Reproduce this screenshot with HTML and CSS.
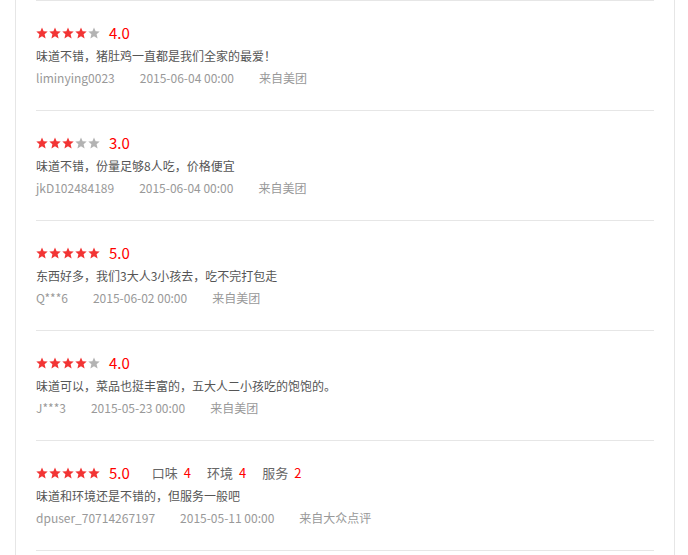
FILE: index.html
```html
<!DOCTYPE html>
<html lang="zh-CN">
<head>
<meta charset="utf-8">
<title>评价</title>
<link rel="stylesheet" href="styles.css">
</head>
<body>
<svg width="0" height="0" class="defs">
  <defs>
    <polygon id="star" points="6,0.4 7.6,4.3 11.7,4.6 8.6,7.3 9.6,11.4 6,9.2 2.4,11.4 3.4,7.3 0.3,4.6 4.4,4.3"/>
  </defs>
</svg>
<div class="panel">
  <ul class="reviews">
    <li class="review">
      <div class="rating-row">
        <span class="stars">
          <svg class="star on" viewBox="0 0 12 12"><use href="#star"/></svg>
          <svg class="star on" viewBox="0 0 12 12"><use href="#star"/></svg>
          <svg class="star on" viewBox="0 0 12 12"><use href="#star"/></svg>
          <svg class="star on" viewBox="0 0 12 12"><use href="#star"/></svg>
          <svg class="star off" viewBox="0 0 12 12"><use href="#star"/></svg>
        </span>
        <span class="score">4.0</span>
      </div>
      <p class="comment">味道不错，猪肚鸡一直都是我们全家的最爱！</p>
      <div class="meta"><span class="user">liminying0023</span><span class="date">2015-06-04 00:00</span><span class="src">来自美团</span></div>
    </li>
    <li class="review">
      <div class="rating-row">
        <span class="stars">
          <svg class="star on" viewBox="0 0 12 12"><use href="#star"/></svg>
          <svg class="star on" viewBox="0 0 12 12"><use href="#star"/></svg>
          <svg class="star on" viewBox="0 0 12 12"><use href="#star"/></svg>
          <svg class="star off" viewBox="0 0 12 12"><use href="#star"/></svg>
          <svg class="star off" viewBox="0 0 12 12"><use href="#star"/></svg>
        </span>
        <span class="score">3.0</span>
      </div>
      <p class="comment">味道不错，份量足够8人吃，价格便宜</p>
      <div class="meta"><span class="user">jkD102484189</span><span class="date">2015-06-04 00:00</span><span class="src">来自美团</span></div>
    </li>
    <li class="review">
      <div class="rating-row">
        <span class="stars">
          <svg class="star on" viewBox="0 0 12 12"><use href="#star"/></svg>
          <svg class="star on" viewBox="0 0 12 12"><use href="#star"/></svg>
          <svg class="star on" viewBox="0 0 12 12"><use href="#star"/></svg>
          <svg class="star on" viewBox="0 0 12 12"><use href="#star"/></svg>
          <svg class="star on" viewBox="0 0 12 12"><use href="#star"/></svg>
        </span>
        <span class="score">5.0</span>
      </div>
      <p class="comment">东西好多，我们3大人3小孩去，吃不完打包走</p>
      <div class="meta"><span class="user">Q***6</span><span class="date">2015-06-02 00:00</span><span class="src">来自美团</span></div>
    </li>
    <li class="review">
      <div class="rating-row">
        <span class="stars">
          <svg class="star on" viewBox="0 0 12 12"><use href="#star"/></svg>
          <svg class="star on" viewBox="0 0 12 12"><use href="#star"/></svg>
          <svg class="star on" viewBox="0 0 12 12"><use href="#star"/></svg>
          <svg class="star on" viewBox="0 0 12 12"><use href="#star"/></svg>
          <svg class="star off" viewBox="0 0 12 12"><use href="#star"/></svg>
        </span>
        <span class="score">4.0</span>
      </div>
      <p class="comment">味道可以，菜品也挺丰富的，五大人二小孩吃的饱饱的。</p>
      <div class="meta"><span class="user">J***3</span><span class="date">2015-05-23 00:00</span><span class="src">来自美团</span></div>
    </li>
    <li class="review">
      <div class="rating-row">
        <span class="stars">
          <svg class="star on" viewBox="0 0 12 12"><use href="#star"/></svg>
          <svg class="star on" viewBox="0 0 12 12"><use href="#star"/></svg>
          <svg class="star on" viewBox="0 0 12 12"><use href="#star"/></svg>
          <svg class="star on" viewBox="0 0 12 12"><use href="#star"/></svg>
          <svg class="star on" viewBox="0 0 12 12"><use href="#star"/></svg>
        </span>
        <span class="score">5.0</span>
        <span class="sub">口味<em>4</em></span>
        <span class="sub">环境<em>4</em></span>
        <span class="sub">服务<em>2</em></span>
      </div>
      <p class="comment">味道和环境还是不错的，但服务一般吧</p>
      <div class="meta"><span class="user">dpuser_70714267197</span><span class="date">2015-05-11 00:00</span><span class="src">来自大众点评</span></div>
    </li>
    <li class="review end"></li>
  </ul>
</div>
</body>
</html>
```

FILE: styles.css
```css
html, body {
  margin: 0;
  padding: 0;
  background: #fff;
}
body {
  font-family: "Microsoft YaHei", "Noto Sans CJK SC", sans-serif;
  font-size: 12px;
  color: #666;
  overflow: hidden;
}
.defs {
  position: absolute;
  width: 0;
  height: 0;
}
.panel {
  margin-left: 15px;
  border-left: 1px solid #e6e6e6;
  border-right: 1px solid #e6e6e6;
  padding: 0 20px;
  width: 618px;
  height: 555px;
}
.reviews {
  list-style: none;
  margin: 0;
  padding: 0;
}
.review {
  border-top: 1px solid #e6e6e6;
  padding-top: 22px;
  box-sizing: border-box;
  height: 110px;
}
.review.end {
  height: 5px;
  padding: 0;
}
.rating-row {
  display: flex;
  align-items: center;
  height: 20px;
}
.stars {
  display: flex;
  gap: 1px;
  margin-right: 9px;
}
.star {
  width: 12px;
  height: 12px;
  display: block;
}
.star.on { fill: #f23434; }
.star.off { fill: #b3b3b3; }
.score {
  color: #f00;
  font-size: 15px;
  line-height: 20px;
  margin-right: 22px;
}
.sub {
  font-size: 13px;
  color: #666;
  margin-right: 16px;
  line-height: 20px;
}
.sub em {
  font-style: normal;
  color: #f00;
  margin-left: 6px;
}
.comment {
  margin: 2px 0 0;
  line-height: 22px;
  color: #555;
}
.meta {
  display: flex;
  gap: 25px;
  line-height: 22px;
  color: #999;
}
```
